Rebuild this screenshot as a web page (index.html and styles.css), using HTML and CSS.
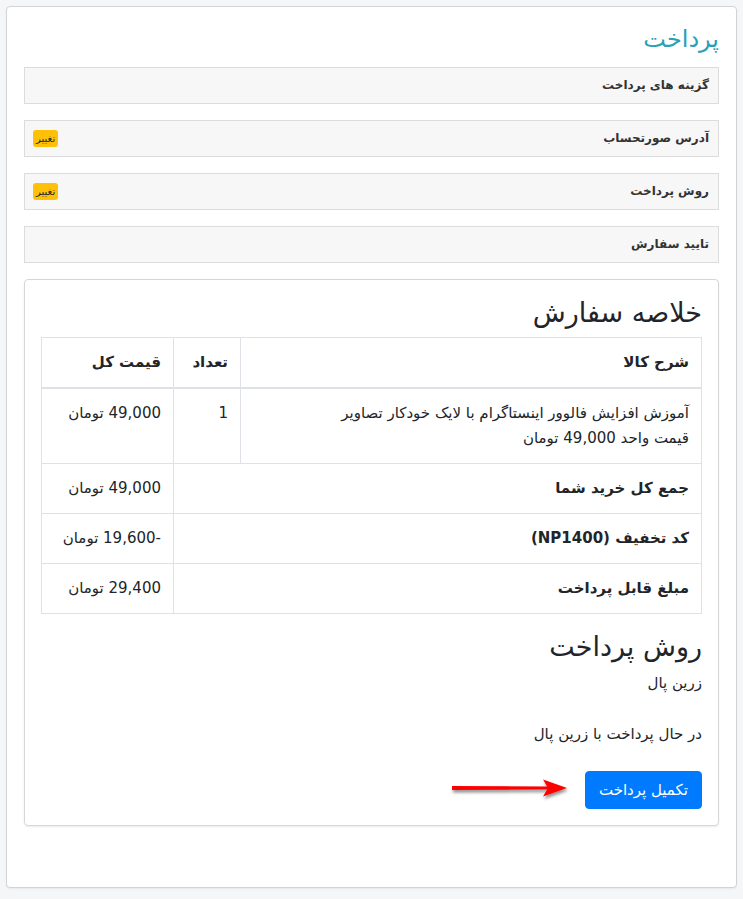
FILE: index.html
```html
<!DOCTYPE html>
<html lang="fa" dir="rtl">

<head>
    <meta charset="UTF-8">
    <meta name="viewport" content="width=device-width, initial-scale=1.0">
    <title>پرداخت</title>
    <link rel="stylesheet" href="styles.css">
</head>

<body>
    <div class="checkout">
        <h2 class="checkout-title">پرداخت</h2>

        <!-- مراحل پرداخت -->
        <div class="step">
            <span class="step-name">گزینه های پرداخت</span>
        </div>
        <div class="step">
            <span class="step-name">آدرس صورتحساب</span>
            <span class="badge">تغییر</span>
        </div>
        <div class="step">
            <span class="step-name">روش پرداخت</span>
            <span class="badge">تغییر</span>
        </div>
        <div class="step">
            <span class="step-name">تایید سفارش</span>
        </div>

        <!-- خلاصه سفارش -->
        <div class="summary">
            <h3 class="summary-title">خلاصه سفارش</h3>
            <table class="order-table">
                <thead>
                    <tr>
                        <th class="col-desc">شرح کالا</th>
                        <th class="col-qty">تعداد</th>
                        <th class="col-total">قیمت کل</th>
                    </tr>
                </thead>
                <tbody>
                    <tr>
                        <td>آموزش افزایش فالوور اینستاگرام با لایک خودکار تصاویر<br>قیمت واحد 49,000 تومان</td>
                        <td>1</td>
                        <td>49,000 تومان</td>
                    </tr>
                    <tr>
                        <th colspan="2">جمع کل خرید شما</th>
                        <td>49,000 تومان</td>
                    </tr>
                    <tr>
                        <th colspan="2">کد تخفیف (NP1400)</th>
                        <td>-19,600 تومان</td>
                    </tr>
                    <tr>
                        <th colspan="2">مبلغ قابل پرداخت</th>
                        <td>29,400 تومان</td>
                    </tr>
                </tbody>
            </table>

            <h3 class="summary-title">روش پرداخت</h3>
            <p class="method">زرین پال</p>
            <p class="paying">در حال پرداخت با زرین پال</p>

            <div class="pay-row">
                <button class="btn-pay">تکمیل پرداخت</button>
                <svg class="arrow" width="120" height="28" viewBox="0 0 120 28">
                    <defs>
                        <filter id="shadow" x="-10%" y="-50%" width="130%" height="220%">
                            <feDropShadow dx="1" dy="2.5" stdDeviation="1.8" flood-color="#000" flood-opacity="0.45"/>
                        </filter>
                    </defs>
                    <g filter="url(#shadow)">
                        <path d="M3 10 L99 10.5 L99 13.5 L3 14 Z" fill="#f00"/>
                        <path d="M94 3.5 L118 12 L94 20.5 L99 12 Z" fill="#f00"/>
                    </g>
                </svg>
            </div>
        </div>
    </div>
</body>

</html>
```

FILE: styles.css
```css
body {
    margin: 0;
    padding: 6px;
    background: #f5f6f8;
    font-family: "DejaVu Sans", sans-serif;
    color: #212529;
    font-size: 15px;
    line-height: 1.6;
}

.checkout {
    background: #fff;
    border: 1px solid #d3d3d3;
    border-radius: 4px;
    padding: 16px 17px 61px;
    box-shadow: 0 1px 2px rgba(0, 0, 0, 0.06);
}

.checkout-title {
    margin: 0 0 12px;
    font-size: 24px;
    font-weight: normal;
    line-height: 32px;
    color: #2a9fb8;
}

.step {
    display: flex;
    align-items: center;
    justify-content: space-between;
    height: 35px;
    padding: 0 9px 0 8px;
    margin-bottom: 16px;
    background: #f7f7f7;
    border: 1px solid #dcdcdc;
    font-size: 12px;
    color: #333;
}

.step-name {
    font-weight: bold;
}

.badge {
    background: #ffc107;
    color: #212529;
    font-size: 10px;
    line-height: 17px;
    padding: 0 3px;
    border-radius: 3px;
}

.summary {
    border: 1px solid #d6d6d6;
    border-radius: 4px;
    padding: 16px;
    box-shadow: 0 1px 2px rgba(0, 0, 0, 0.08);
}

.summary-title {
    margin: 0 0 7px;
    font-size: 27px;
    font-weight: normal;
    line-height: 34px;
}

.order-table {
    width: 100%;
    border-collapse: collapse;
    margin-bottom: 16px;
    line-height: 25px;
}

.order-table th,
.order-table td {
    border: 1px solid #dee2e6;
    padding: 12px;
    text-align: right;
    vertical-align: top;
}

.order-table th {
    font-weight: bold;
}

.order-table thead th {
    border-bottom: 2px solid #dee2e6;
}

.col-qty {
    width: 42px;
}

.col-total {
    width: 107px;
}

.method {
    margin: 0 0 27px;
}

.paying {
    margin: 0 0 25px;
}

.pay-row {
    display: flex;
    align-items: center;
    gap: 16px;
}

.btn-pay {
    background: #007bff;
    color: #fff;
    border: 1px solid #007bff;
    border-radius: 4px;
    font-family: inherit;
    font-size: 15px;
    line-height: 24px;
    padding: 6px 13px;
}

.arrow {
    display: block;
}
```
